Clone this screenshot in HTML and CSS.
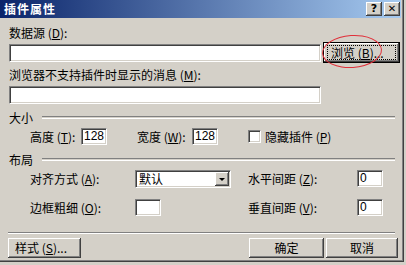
FILE: index.html
```html
<!DOCTYPE html>
<html lang="zh-CN">
<head>
    <meta charset="UTF-8">
    <title>插件属性</title>
    <link rel="stylesheet" href="styles.css">
</head>
<body>
    <div class="window">
        <div class="titlebar">
            <span class="title">插件属性</span>
            <span class="tbtn">?</span>
            <span class="tbtn close">✕</span>
        </div>

        <div class="content">
            <div class="label top">数据源 (<u>D</u>):</div>
            <div class="row src">
                <span class="field wide"></span>
                <span class="btn default"><span class="focus">浏览 (<u>B</u>)...</span></span>
            </div>

            <div class="label msg">浏览器不支持插件时显示的消息 (<u>M</u>):</div>
            <span class="field wide msg-field"></span>

            <div class="group size-group"><span>大小</span><i class="rule"></i></div>
            <div class="row size">
                <span class="lbl w51">高度 (<u>T</u>):</span>
                <span class="field num">128</span>
                <span class="lbl w55 gap30">宽度 (<u>W</u>):</span>
                <span class="field num">128</span>
                <span class="check gap30"></span>
                <span class="lbl">隐藏插件 (<u>P</u>)</span>
            </div>

            <div class="group layout-group"><span>布局</span><i class="rule"></i></div>
            <div class="row align">
                <span class="lbl w105">对齐方式 (<u>A</u>):</span>
                <span class="field select">默认<span class="arrow"></span></span>
                <span class="lbl w109 gap17">水平间距 (<u>Z</u>):</span>
                <span class="field num">0</span>
            </div>
            <div class="row border">
                <span class="lbl w105">边框粗细 (<u>O</u>):</span>
                <span class="field num"></span>
                <span class="lbl w109 gap87">垂直间距 (<u>V</u>):</span>
                <span class="field num">0</span>
            </div>

            <i class="separator"></i>
            <div class="row buttons">
                <span class="btn style">样式 (<u>S</u>)...</span>
                <span class="btn ok">确定</span>
                <span class="btn cancel">取消</span>
            </div>
        </div>

        <!-- hand drawn mark round the browse button -->
        <span class="mark"></span>
    </div>
</body>
</html>
```

FILE: styles.css
```css
body {
    margin: 0;
    background: #d4d0c8;
    font-family: "Noto Sans CJK SC", "Liberation Sans", sans-serif;
    font-size: 12px;
    color: #000;
}

.window {
    position: relative;
    width: 401px;
    height: 262px;
    padding-right: 3px;
    background: #d4d0c8;
    box-shadow: inset -1px -1px #404040, inset -2px -2px #808080;
    border-bottom: 2px solid #d4d0c8;
}

u {
    text-decoration: underline;
    text-underline-offset: 1px;
}

.titlebar {
    display: flex;
    align-items: center;
    height: 18px;
    padding-left: 4px;
    background: linear-gradient(to right, #0a246a, #a6caf0);
}

.title {
    flex: 1;
    color: #fff;
    font-weight: bold;
    font-size: 12px;
    line-height: 18px;
    letter-spacing: 1px;
}

.tbtn {
    width: 16px;
    height: 14px;
    margin-right: 1px;
    background: #d4d0c8;
    box-shadow: inset -1px -1px #404040, inset 1px 1px #fff, inset -2px -2px #808080;
    font-family: "DejaVu Sans", sans-serif;
    font-weight: bold;
    font-size: 11px;
    line-height: 14px;
    text-align: center;
}

.tbtn.close {
    margin-left: 1px;
    font-size: 10px;
}

.content {
    padding-left: 9px;
}

.label {
    height: 13px;
    line-height: 13px;
}

.label.top {
    margin-top: 8px;
}

.label.msg {
    margin-top: 5px;
}

.row {
    display: flex;
    align-items: center;
}

.row.src {
    margin-top: 3px;
    height: 21px;
}

.field {
    display: block;
    box-sizing: border-box;
    height: 18px;
    padding-left: 3px;
    background: #fff;
    border: 1px solid;
    border-color: #808080 #fff #fff #808080;
    box-shadow: inset 1px 1px #404040, inset -1px -1px #d4d0c8;
    line-height: 15px;
}

.field.wide {
    width: 312px;
}

.msg-field {
    margin-top: 5px;
}

.btn {
    display: flex;
    align-items: center;
    justify-content: center;
    box-sizing: border-box;
    height: 20px;
    background: #d4d0c8;
    box-shadow: inset -1px -1px #404040, inset 1px 1px #fff, inset -2px -2px #808080, inset 2px 2px #d4d0c8;
    line-height: 14px;
}

.btn.default {
    width: 77px;
    height: 21px;
    margin-left: 2px;
    border: 1px solid #000;
}

.focus {
    display: block;
    box-sizing: border-box;
    width: 69px;
    height: 15px;
    padding-left: 3px;
    border: 1px dotted #000;
    line-height: 13px;
    text-align: left;
}

.group {
    display: flex;
    align-items: center;
    height: 13px;
    line-height: 13px;
}

.size-group {
    margin-top: 7px;
}

.layout-group {
    margin-top: 8px;
}

.rule {
    flex: none;
    width: 353px;
    height: 1px;
    margin-left: 9px;
    border-top: 1px solid #808080;
    border-bottom: 1px solid #fff;
}

.row.size {
    margin-top: 4px;
    padding-left: 21px;
    height: 17px;
}

.row.align {
    margin-top: 4px;
    padding-left: 21px;
    height: 17px;
}

.row.border {
    margin-top: 12px;
    padding-left: 21px;
    height: 17px;
}

.lbl {
    display: block;
    line-height: 13px;
    white-space: nowrap;
}

.w51 { width: 51px; }
.w55 { width: 55px; }
.w105 { width: 105px; }
.w109 { width: 109px; }
.gap30 { margin-left: 30px; }
.gap17 { margin-left: 17px; }
.gap87 { margin-left: 87px; }

.field.num {
    width: 26px;
    height: 17px;
    padding-left: 2px;
    line-height: 14px;
    font-family: "Liberation Sans", sans-serif;
}

.check {
    display: block;
    box-sizing: border-box;
    width: 13px;
    height: 13px;
    margin-right: 4px;
    background: #fff;
    border: 1px solid;
    border-color: #808080 #fff #fff #808080;
    box-shadow: inset 1px 1px #404040, inset -1px -1px #d4d0c8;
}

.field.select {
    position: relative;
    width: 96px;
    height: 18px;
    line-height: 15px;
}

.arrow {
    position: absolute;
    top: 1px;
    right: 1px;
    width: 14px;
    height: 14px;
    background: #d4d0c8;
    box-shadow: inset -1px -1px #404040, inset 1px 1px #fff, inset -2px -2px #808080;
}

.arrow::after {
    content: "";
    position: absolute;
    left: 4px;
    top: 6px;
    border-left: 3px solid transparent;
    border-right: 3px solid transparent;
    border-top: 3px solid #000;
}

.separator {
    display: block;
    width: 387px;
    height: 0;
    margin: 16px 0 0 -1px;
    border-top: 1px solid #808080;
    border-bottom: 1px solid #fff;
}

.row.buttons {
    margin-top: 4px;
    margin-left: -1px;
}

.btn.style {
    width: 73px;
    justify-content: flex-start;
    padding-left: 7px;
}

.btn.ok {
    width: 75px;
    margin-left: 168px;
}

.btn.cancel {
    width: 72px;
    margin-left: 2px;
}

.mark {
    position: absolute;
    left: 322px;
    top: 35px;
    width: 58px;
    height: 31px;
    border: 1px solid #e0303a;
    border-radius: 50%;
    transform: rotate(-4deg);
}
```
